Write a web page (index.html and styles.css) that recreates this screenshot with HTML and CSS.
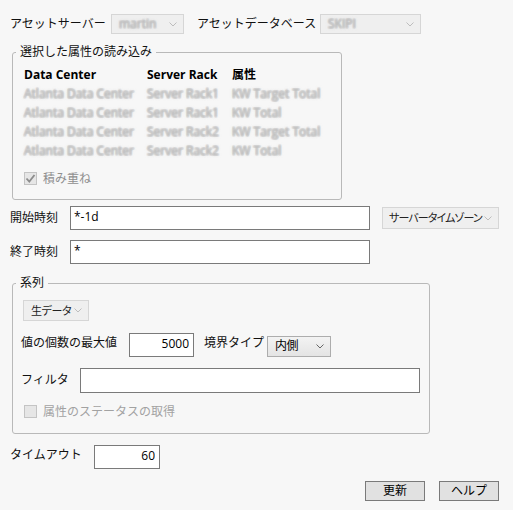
FILE: index.html
```html
<!DOCTYPE html>
<html lang="ja">
<head>
  <meta charset="UTF-8">
  <meta name="viewport" content="width=device-width, initial-scale=1.0">
  <title>PI データの読み込み</title>
  <link rel="stylesheet" href="styles.css">
</head>
<body>

  <!-- Server / database -->
  <div class="top-row">
    <span class="lbl lbl-server">アセットサーバー</span>
    <div class="combo combo-off combo-server">
      <span class="blur">martin</span>
      <svg class="chev" width="8" height="5" viewBox="0 0 8 5"><polyline points="0.5,0.5 4,4 7.5,0.5"/></svg>
    </div>
    <span class="lbl lbl-db">アセットデータベース</span>
    <div class="combo combo-off combo-db">
      <span class="blur">SKIPI</span>
      <svg class="chev" width="8" height="5" viewBox="0 0 8 5"><polyline points="0.5,0.5 4,4 7.5,0.5"/></svg>
    </div>
  </div>

  <!-- Selected attributes -->
  <fieldset class="group group-attr">
    <legend>選択した属性の読み込み</legend>
    <div class="attr-grid">
      <span class="head">Data Center</span>
      <span class="head">Server Rack</span>
      <span class="head">属性</span>

      <span class="blur cell">Atlanta Data Center</span>
      <span class="blur cell">Server Rack1</span>
      <span class="blur cell">KW Target Total</span>

      <span class="blur cell">Atlanta Data Center</span>
      <span class="blur cell">Server Rack1</span>
      <span class="blur cell">KW Total</span>

      <span class="blur cell">Atlanta Data Center</span>
      <span class="blur cell">Server Rack2</span>
      <span class="blur cell">KW Target Total</span>

      <span class="blur cell">Atlanta Data Center</span>
      <span class="blur cell">Server Rack2</span>
      <span class="blur cell">KW Total</span>
    </div>
    <div class="check-row check-stack">
      <span class="check check-on">
        <svg width="11" height="11" viewBox="0 0 11 11"><polyline points="1.5,5.5 4.3,8.5 9.5,2"/></svg>
      </span>
      <span class="check-text">積み重ね</span>
    </div>
  </fieldset>

  <!-- Time range -->
  <div class="time-row time-start">
    <span class="lbl lbl-time">開始時刻</span>
    <input class="field field-time" type="text" value="*-1d">
    <div class="combo combo-off combo-zone">
      <span class="combo-text">サーバータイムゾーン</span>
      <svg class="chev" width="8" height="5" viewBox="0 0 8 5"><polyline points="0.5,0.5 4,4 7.5,0.5"/></svg>
    </div>
  </div>
  <div class="time-row time-end">
    <span class="lbl lbl-time">終了時刻</span>
    <input class="field field-time" type="text" value="*">
  </div>

  <!-- Series -->
  <fieldset class="group group-series">
    <legend>系列</legend>
    <div class="combo combo-off combo-raw">
      <span class="combo-text">生データ</span>
      <svg class="chev" width="8" height="5" viewBox="0 0 8 5"><polyline points="0.5,0.5 4,4 7.5,0.5"/></svg>
    </div>

    <div class="form-row row-max">
      <span class="lbl lbl-max">値の個数の最大値</span>
      <input class="field field-num field-max" type="text" value="5000">
      <span class="lbl lbl-bound">境界タイプ</span>
      <div class="combo combo-on combo-bound">
        <span class="combo-text">内側</span>
        <svg class="chev" width="8" height="5" viewBox="0 0 8 5"><polyline points="0.5,0.5 4,4 7.5,0.5"/></svg>
      </div>
    </div>

    <div class="form-row row-filter">
      <span class="lbl lbl-filter">フィルタ</span>
      <input class="field field-filter" type="text" value="">
    </div>

    <div class="check-row check-status">
      <span class="check"></span>
      <span class="check-text">属性のステータスの取得</span>
    </div>
  </fieldset>

  <!-- Timeout -->
  <div class="time-row timeout-row">
    <span class="lbl lbl-timeout">タイムアウト</span>
    <input class="field field-num field-timeout" type="text" value="60">
  </div>

  <div class="button-row">
    <button class="btn">更新</button>
    <button class="btn">ヘルプ</button>
  </div>

</body>
</html>
```

FILE: styles.css
```css
body {
  margin: 0;
  background: #f7f7f7;
  color: #111;
  font-family: "Open Sans", "Noto Sans CJK JP", sans-serif;
  font-size: 12px;
  line-height: 16px;
}

.lbl {
  display: inline-block;
  flex-shrink: 0;
  white-space: nowrap;
}

/* Top row: server and database */
.top-row {
  display: flex;
  align-items: center;
  height: 20px;
  margin-top: 14px;
  padding-left: 10px;
}

.lbl-server {
  width: 101px;
}

.lbl-db {
  width: 123px;
  margin-left: 13px;
}

/* Fake combo boxes */
.combo {
  box-sizing: border-box;
  display: flex;
  align-items: center;
  justify-content: space-between;
  padding: 0 6px 0 7px;
  flex-shrink: 0;
  overflow: hidden;
}

.combo-text {
  color: #222;
  white-space: nowrap;
  font-size: 11px;
  font-feature-settings: "palt";
  letter-spacing: -0.4px;
}

.combo-off {
  background: #efefef;
  border: 1px solid #d6d6d6;
}

.combo-off .chev polyline {
  stroke: #bdbdbd;
}

.combo-on {
  background: linear-gradient(#f3f3f3, #e4e4e4);
  border: 1px solid #adadad;
}

.combo-on .chev polyline {
  stroke: #666;
}

.chev {
  flex-shrink: 0;
}

.chev polyline {
  fill: none;
  stroke-width: 1;
}

.combo-server {
  width: 73px;
  height: 20px;
}

.combo-db {
  width: 101px;
  height: 20px;
}

/* Blurred (hidden) names, smeared with offset shadows */
.blur {
  color: rgba(190, 190, 190, 0.35);
  text-shadow:
    1px 0 rgba(190, 190, 190, 0.35),
    -1px 0 rgba(190, 190, 190, 0.35),
    0 1px rgba(190, 190, 190, 0.35),
    0 -1px rgba(190, 190, 190, 0.35),
    1px 1px rgba(200, 200, 200, 0.25),
    -1px -1px rgba(200, 200, 200, 0.25),
    1px -1px rgba(200, 200, 200, 0.25),
    -1px 1px rgba(200, 200, 200, 0.25),
    0 0 3px rgba(170, 170, 170, 0.6);
  white-space: nowrap;
}

/* Group boxes */
.group {
  box-sizing: border-box;
  margin: 0 0 0 12px;
  border: 1px solid #b9b9b9;
  border-radius: 3px;
  min-width: 0;
}

.group legend {
  padding: 0 4px;
  line-height: 16px;
}

.group-attr {
  width: 330px;
  margin-top: 10px;
  padding: 5px 11px 14px 11px;
}

.group-attr legend {
  margin-left: -8px;
}

.attr-grid {
  display: grid;
  grid-template-columns: 123px 85px auto;
  line-height: 19px;
}

.head {
  font-weight: bold;
  color: #000;
  white-space: nowrap;
}

.check-row {
  display: flex;
  align-items: center;
  height: 13px;
}

.check-stack {
  margin-top: 12px;
}

.check {
  box-sizing: border-box;
  width: 13px;
  height: 13px;
  background: #e6e6e6;
  border: 1px solid #c4c4c4;
  display: flex;
  align-items: center;
  justify-content: center;
}

.check svg polyline {
  fill: none;
  stroke: #8c8c8c;
  stroke-width: 1.8;
}

.check-text {
  margin-left: 6px;
  color: #8f8f8f;
  white-space: nowrap;
}

/* Time rows */
.time-row {
  display: flex;
  align-items: center;
  padding-left: 10px;
}

.time-start {
  margin-top: 6px;
}

.time-end {
  margin-top: 10px;
}

.lbl-time {
  width: 60px;
}

.field {
  box-sizing: border-box;
  border: 1px solid #7a7a7a;
  background: #fff;
  font-family: "Open Sans", "Noto Sans CJK JP", sans-serif;
  font-size: 12px;
  color: #000;
  padding: 0 4px 3px 3px;
  margin: 0;
  outline: none;
}

.field-time {
  width: 300px;
  height: 24px;
}

.field-num {
  text-align: right;
}

.combo-zone {
  width: 117px;
  height: 22px;
  margin-left: 12px;
  padding-left: 6px;
}

.combo-zone .combo-text {
  letter-spacing: -0.9px;
}

/* Series group */
.group-series {
  width: 418px;
  margin-top: 11px;
  padding: 9px 8px 15px 8px;
}

.group-series legend {
  margin-left: -5px;
}

.combo-raw {
  width: 66px;
  height: 21px;
  margin-left: 2px;
}

.form-row {
  display: flex;
  align-items: center;
}

.row-max {
  margin-top: 12px;
}

.lbl-max {
  width: 108px;
  margin-top: -4px;
}

.field-max {
  width: 65px;
  height: 24px;
}

.lbl-bound {
  width: 63px;
  margin-left: 10px;
  margin-top: -4px;
}

.combo-bound {
  width: 64px;
  height: 21px;
  margin-top: 2px;
}

.combo-bound .combo-text {
  color: #000;
  font-size: 12px;
}

.row-filter {
  margin-top: 11px;
}

.lbl-filter {
  width: 59px;
  margin-top: -2px;
}

.field-filter {
  width: 340px;
  height: 25px;
}

.check-status {
  margin-top: 12px;
  padding-left: 3px;
}

.check-status .check-text {
  color: #a2a2a2;
}

/* Timeout and buttons */
.timeout-row {
  margin-top: 11px;
}

.lbl-timeout {
  width: 84px;
  margin-top: -4px;
}

.field-timeout {
  width: 66px;
  height: 24px;
}

.button-row {
  display: flex;
  justify-content: flex-end;
  gap: 14px;
  margin-top: 12px;
  padding-right: 14px;
}

.btn {
  box-sizing: border-box;
  width: 60px;
  height: 20px;
  padding: 0;
  background: #e1e1e1;
  border: 1px solid #7a7a7a;
  font-family: "Open Sans", "Noto Sans CJK JP", sans-serif;
  font-size: 12px;
  line-height: 16px;
  color: #000;
}
```
